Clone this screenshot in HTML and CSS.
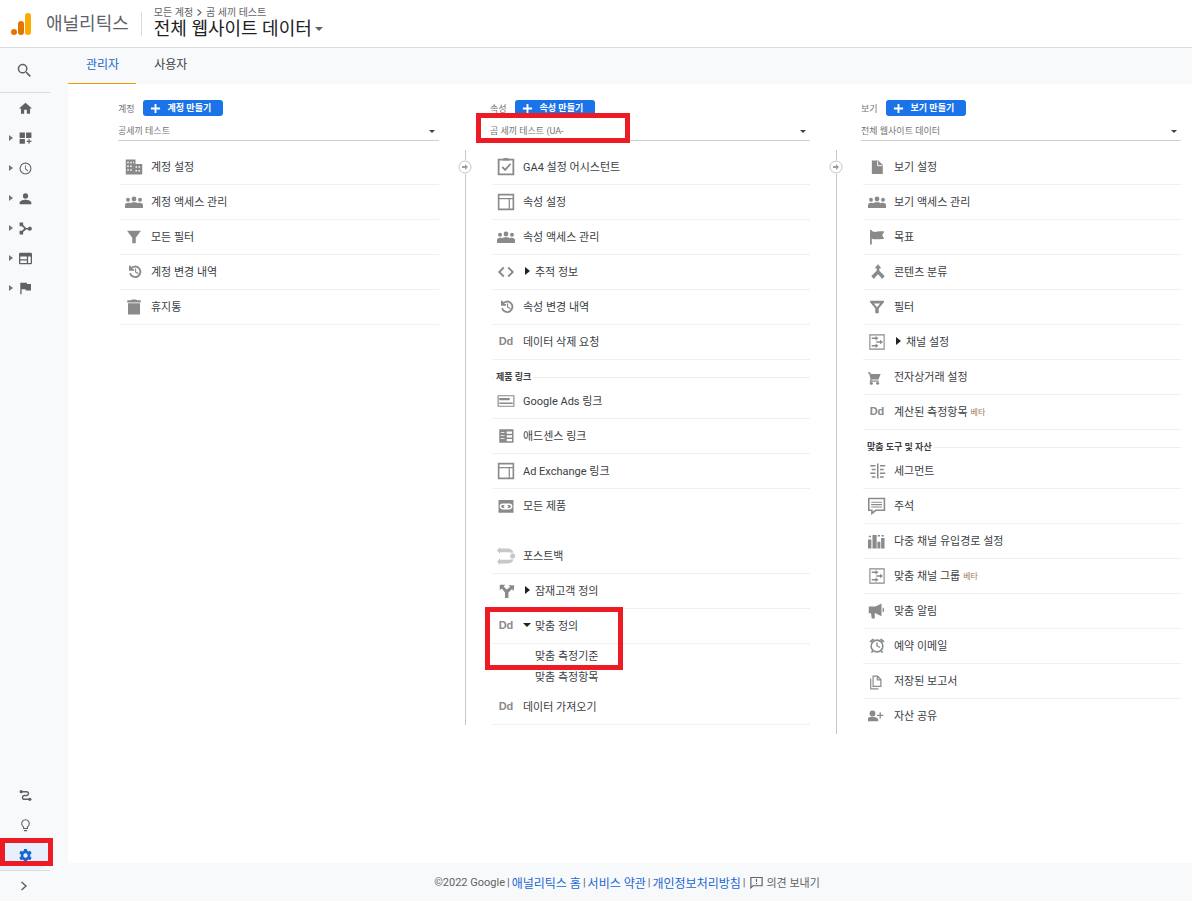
FILE: index.html
```
<!DOCTYPE html>
<html lang="ko">
<head>
    <meta charset="UTF-8">
    <meta name="viewport" content="width=device-width, initial-scale=1.0">
    <title>애널리틱스</title>
    <link rel="stylesheet" href="styles.css">
</head>
<body>
    <svg class="sprite" aria-hidden="true">
        <symbol id="i-search" viewBox="2 2 20 20"><path d="M15.500 14h-.8l-.3-.3A6.500 6.500 0 1 0 13.700 14.400l.3.3v.8l5 5 1.500-1.500zm-6 0a4.500 4.500 0 1 1 0-9 4.500 4.500 0 0 1 0 9z"/></symbol>
        <symbol id="i-home" viewBox="2 2 20 20"><path d="M10 20v-6h4v6h5v-8h3L12 3 2 12h3v8z"/></symbol>
        <symbol id="i-custom" viewBox="1 2 22 22"><path d="M2 3h9v9H2zM13 3h9v9h-9zM2 14h9v8H2zM17 14h2v3h3v2h-3v3h-2v-3h-3v-2h3z"/></symbol>
        <symbol id="i-clock" viewBox="0 0 24 24"><path d="M12 1a11 11 0 1 0 0 22 11 11 0 0 0 0-22zm0 20a9 9 0 1 1 0-18 9 9 0 0 1 0 18zM12.500 6H11v7l5 4 1-1.500-4.500-3.300z"/></symbol>
        <symbol id="i-person" viewBox="2 2 20 20"><path d="M12 12a4 4 0 1 0 0-8 4 4 0 0 0 0 8zm0 2c-4 0-9 1.500-9 4.500V21h18v-2.500c0-3-5-4.500-9-4.500z"/></symbol>
        <symbol id="i-acquire" viewBox="1 1 22 22"><path d="M2 2h6v4l5 5h3a3.500 3.500 0 1 1 0 2.500h-3L8 18v4H2v-6h4l4-4-4-4H2z"/></symbol>
        <symbol id="i-web" viewBox="2 2 20 20"><path d="M20 3H4a2 2 0 0 0-2 2v14c0 1.100.9 2 2 2h16a2 2 0 0 0 2-2V5a2 2 0 0 0-2-2zm-6 16H4v-4h10zm0-6H4V9h10zm6 6h-4V9h4z"/></symbol>
        <symbol id="i-flag" viewBox="2 3 20 20"><path d="M14.400 6 14 4H4v18h2v-8h6l.4 2h8V6z"/></symbol>
        <symbol id="i-path" viewBox="0 0 24 24"><circle cx="4" cy="5" r="3"/><circle cx="20" cy="19" r="3"/><path d="M5 5h9a3.500 3.500 0 0 1 0 7h-4a3.500 3.500 0 0 0 0 7h9" fill="none" stroke="currentColor" stroke-width="2.500"/></symbol>
        <symbol id="i-bulb" viewBox="0 0 24 24"><path d="M8.500 17.500v-3a7 7 0 1 1 7 0v3zM9 21.500h6" fill="none" stroke="currentColor" stroke-width="2"/></symbol>
        <symbol id="i-gear" viewBox="1 1 22 22"><path fill-rule="evenodd" d="M9.500 1h5l.5 3 2 1.200 3-1.200 2.500 4.300L20 10.500v3l2.500 2.200L20 20l-3-1.200-2 1.200-.5 3h-5L9 20l-2-1.200L4 20l-2.500-4.300L4 13.500v-3L1.500 8.300 4 4l3 1.200L9 4zM12 8.300a3.700 3.700 0 1 0 0 7.400 3.700 3.700 0 0 0 0-7.400z"/></symbol>
        <symbol id="i-chevron" viewBox="0 0 24 24"><path d="m7 4 9 8-9 8" fill="none" stroke="currentColor" stroke-width="3"/></symbol>
        <symbol id="i-plus" viewBox="0 0 12 12"><path d="M5 1h2v4h4v2H7v4H5V7H1V5h4z"/></symbol>
        <symbol id="i-building" viewBox="0 0 24 24"><path fill-rule="evenodd" d="M1 2h13v6h9v14H1zM3 5v2h2V5zm4 0v2h2V5zm4 0v2h1V5zM3 10v2h2v-2zm4 0v2h2v-2zm-4 5v2h2v-2zm4 0v2h2v-2zm7-4v2h2v-2zm4 0v2h2v-2zm-4 5v2h2v-2zm4 0v2h2v-2z"/></symbol>
        <symbol id="i-people" viewBox="1 0 22 24"><circle cx="4" cy="9" r="2.600"/><circle cx="12" cy="8" r="3.200"/><circle cx="20" cy="9" r="2.600"/><path d="M0 20v-4c0-2.500 4-3.500 7-2.500 2-1.600 8-1.600 10 0 3-1 7 0 7 2.500v4z"/></symbol>
        <symbol id="i-funnel" viewBox="-1 -1 26 26"><path d="M2 3h20l-7.500 10v8h-5v-8z"/></symbol>
        <symbol id="i-filter" viewBox="-1 -1 26 26"><path fill-rule="evenodd" d="M2 3h20v2l-7.500 9v7h-5v-7L2 5zm5.500 4L12 12.500 16.500 7z"/></symbol>
        <symbol id="i-history" viewBox="-4 -2 29 29"><path d="M5 8a8.500 8.500 0 1 1-.8 6.500M4 2.500V9h6.500" fill="none" stroke="currentColor" stroke-width="3"/><path d="M12 7h2v5l4 2.300-1 1.700-5-3z"/></symbol>
        <symbol id="i-trash" viewBox="0 0 24 24"><path d="M4 7h16v15H4zM3 3h5l1-1h6l1 1h5v3H3z"/></symbol>
        <symbol id="i-check" viewBox="1 2 22 22"><path d="M3 4h18v18H3zM7.500 13l3.500 3.500L17.500 9" fill="none" stroke="currentColor" stroke-width="2.200"/><path d="M8 5V2.500h2a2 2 0 0 1 4 0h2V5z"/></symbol>
        <symbol id="i-layout" viewBox="1 1 22 22"><path d="M3 3h18v18H3z" fill="none" stroke="currentColor" stroke-width="2"/><path d="M3 8h18M16 8v13" fill="none" stroke="currentColor" stroke-width="1.500"/></symbol>
        <symbol id="i-code" viewBox="0 0 24 24"><path d="m9 6-6 6 6 6M15 6l6 6-6 6" fill="none" stroke="currentColor" stroke-width="2.500"/></symbol>
        <symbol id="i-ads" viewBox="1 0 22 24"><path d="M1.500 5h21v14h-21z" fill="none" stroke="currentColor" stroke-width="1.500"/><path d="M3 8h14v3H3zM3 14h18v2H3z"/></symbol>
        <symbol id="i-news" viewBox="0 0 24 24"><path fill-rule="evenodd" d="M3 3h19v18H3zm10 3v3h7V6zm0 5v3h7v-3zm0 5v3h7v-3zM5 7v1h5V7zm0 4v1h5v-1zm0 4v1h5v-1z"/></symbol>
        <symbol id="i-link" viewBox="0 0 24 24"><path d="M2 4h20v17H2z"/><path d="M11 9.500H7.500a3 3 0 0 0 0 6H11zm2 0h3.500a3 3 0 0 1 0 6H13zM9 12.500h6" fill="none" stroke="#fff" stroke-width="2"/></symbol>
        <symbol id="i-postback" viewBox="0 0 24 24"><path d="M0 4.500 4 0v2h10c4 0 7 2 8 5.500h-4.500C16.500 7 15 7 13 7H4v2zM0 19.500 4 15v2h9c2 0 3.500 0 4.500-.5H22c-1 3.500-4 5.500-8 5.500H4v2z"/><circle cx="21" cy="12" r="3.500"/></symbol>
        <symbol id="i-split" viewBox="-2 -1 26 26"><path d="M2 3h8L7.500 5.500 12 10l5-4-2-2.500 8 .5-1 8-2.500-2.500L14.500 14v8h-5v-8L5 8.500 2 11z"/></symbol>
        <symbol id="i-file" viewBox="-2 -2 28 28"><path d="M4 2h10l7 7v14H4z"/><path d="M13 3v7h7" fill="none" stroke="#fff" stroke-width="1.500"/></symbol>
        <symbol id="i-goal" viewBox="-2 -1 26 26"><path d="M1 2h2.500v1.500c5 3 9-1 18 .5l-3 5.500 3 5.500c-7-.5-12 1.500-18-.5V23H1z"/></symbol>
        <symbol id="i-merge" viewBox="-3 -1 27 27"><path d="m12 1 5 6h-3v3.500l8 8-3.500 4.500-6.500-7-6.500 7L2 18.500l8-8V7H7z"/></symbol>
        <symbol id="i-channel" viewBox="0 0 24 24"><path d="M2.500 2.500h19v19h-19z" fill="none" stroke="currentColor" stroke-width="1.500"/><path d="M5 6h5V4l4 3-4 3V8H5zM11 11h5V9l4 3-4 3v-2h-5zM5 16h5v-2l4 3-4 3v-2H5z"/></symbol>
        <symbol id="i-cart" viewBox="1 -4 30 30"><path d="M0 3h4.500l1.200 3H22l-3.500 9H7l-.7 2H19v2H3.500l1.800-4.500L2.800 5H0z"/><circle cx="6.500" cy="21.500" r="2.500"/><circle cx="17" cy="21.500" r="2.500"/></symbol>
        <symbol id="i-segment" viewBox="0 0 24 24"><path d="M3 4h7v2H3zM5 9h5v2H5zM3 14h7v2H3zM5 19h5v2H5zM12 2h2v20h-2zM16 4h7v2h-7zM16 9h5v2h-5zM16 14h7v2h-7zM16 19h5v2h-5z"/></symbol>
        <symbol id="i-note" viewBox="1 1 23 23"><path d="M2 3h20v15H11l-5 4v-4H2z" fill="none" stroke="currentColor" stroke-width="2"/><path d="M5 7h14v1.500H5zM5 10h14v1.500H5zM5 13h14v1.500H5z"/></symbol>
        <symbol id="i-bars" viewBox="1 0 24 24"><path d="M1 10h4.500v12H1zM7 4h5.500v18H7zM13.500 13h4v9h-4zM18.500 8H23v14h-4.500zM2 5h3v2H2zM14 4h3v2h-3zM19 4h3v2h-3z"/></symbol>
        <symbol id="i-horn" viewBox="1 0 24 24"><path d="M2 6h9l8-4v17l-8-4H10v7H6l-1-7H2zM20.500 7a4 4 0 0 1 0 7z"/></symbol>
        <symbol id="i-alarm" viewBox="-1 0 26 26"><circle cx="12" cy="13" r="8.500" fill="none" stroke="currentColor" stroke-width="2.200"/><path d="m1 6 5-4 2 2-5 4zM23 6l-5-4-2 2 5 4zM11 8h2v4.500l4 2-1 1.500-5-2.500zM5 19l2 2-2 2-2-1zM19 19l-2 2 2 2 2-1z"/></symbol>
        <symbol id="i-copy" viewBox="-2 -5 30 30"><path d="M6.500 2H14l5.500 5.500V19h-13zM13.500 2v6H19M2.500 6v17h13" fill="none" stroke="currentColor" stroke-width="2"/></symbol>
        <symbol id="i-share" viewBox="2 -2 28 28"><circle cx="9" cy="8" r="4.500"/><path d="M0 20v-2.500c0-3 6-4.500 9-4.500s9 1.500 9 4.500V20zM20 6h2v4h4v2h-4v4h-2v-4h-4v-2h4z"/></symbol>
        <symbol id="i-feedback" viewBox="1 1 22 22"><path d="M2.500 3.500h19v14H6l-3.500 3.500z" fill="none" stroke="currentColor" stroke-width="2"/><path d="M11 6h2v5h-2zM11 13h2v2h-2z"/></symbol>
        <symbol id="i-arrow" viewBox="0 0 14 14"><circle cx="7" cy="7" r="6" fill="#fff" stroke="#c6c6c6"/><path d="M4 6h3V4l3 3-3 3V8H4z"/></symbol>
    </svg>

    <header class="header">
        <svg class="logo" viewBox="0 0 20 24" aria-hidden="true">
            <rect x="14" y="1" width="6" height="22" rx="3" fill="#f9ab00"/>
            <rect x="7" y="9" width="6" height="14" rx="3" fill="#e37400"/>
            <circle cx="3" cy="20" r="3" fill="#e37400"/>
        </svg>
        <h1 class="product">애널리틱스</h1>
        <div class="account">
            <div class="crumbs">모든 계정 <svg class="crumb-icon"><use href="#i-chevron"/></svg> 곰 세끼 테스트</div>
            <button class="view-picker">전체 웹사이트 데이터<span class="caret"></span></button>
        </div>
    </header>

    <div class="layout">
        <nav class="sidebar">
            <button class="search" aria-label="검색"><svg class="search-icon"><use href="#i-search"/></svg></button>
            <ul class="side-list">
                <li><a href="#" class="side-item" aria-label="홈"><svg><use href="#i-home"/></svg></a></li>
                <li><a href="#" class="side-item expand" aria-label="맞춤설정"><svg><use href="#i-custom"/></svg></a></li>
                <li><a href="#" class="side-item expand" aria-label="실시간"><svg><use href="#i-clock"/></svg></a></li>
                <li><a href="#" class="side-item expand" aria-label="잠재고객"><svg><use href="#i-person"/></svg></a></li>
                <li><a href="#" class="side-item expand" aria-label="획득"><svg><use href="#i-acquire"/></svg></a></li>
                <li><a href="#" class="side-item expand" aria-label="행동"><svg><use href="#i-web"/></svg></a></li>
                <li><a href="#" class="side-item expand" aria-label="전환"><svg><use href="#i-flag"/></svg></a></li>
            </ul>
            <ul class="side-list side-bottom">
                <li><a href="#" class="side-item" aria-label="기여"><svg><use href="#i-path"/></svg></a></li>
                <li><a href="#" class="side-item" aria-label="탐색"><svg><use href="#i-bulb"/></svg></a></li>
                <li class="marked"><a href="#" class="side-item active" aria-label="관리"><svg><use href="#i-gear"/></svg></a><span class="mark mark-admin"></span></li>
            </ul>
            <button class="collapse" aria-label="펼치기"><svg class="collapse-icon"><use href="#i-chevron"/></svg></button>
        </nav>

        <div class="content">
            <div class="tabs">
                <a href="#" class="tab active">관리자</a>
                <a href="#" class="tab">사용자</a>
            </div>

            <main class="panel">
                <section class="column">
                    <div class="column-body">
                        <div class="column-head">
                            <label for="account">계정</label>
                            <button class="create"><svg><use href="#i-plus"/></svg>계정 만들기</button>
                        </div>
                        <div class="picker">
                            <select id="account"><option>공세끼 테스트</option></select>
                        </div>
                        <ul class="menu">
                            <li><a href="#" class="row"><svg><use href="#i-building"/></svg>계정 설정</a></li>
                            <li><a href="#" class="row"><svg><use href="#i-people"/></svg>계정 액세스 관리</a></li>
                            <li><a href="#" class="row"><svg><use href="#i-funnel"/></svg>모든 필터</a></li>
                            <li><a href="#" class="row"><svg><use href="#i-history"/></svg>계정 변경 내역</a></li>
                            <li><a href="#" class="row"><svg><use href="#i-trash"/></svg>휴지통</a></li>
                        </ul>
                    </div>
                </section>

                <section class="column linked">
                    <div class="connector"><svg><use href="#i-arrow"/></svg></div>
                    <div class="column-body">
                        <div class="column-head">
                            <label for="property">속성</label>
                            <button class="create"><svg><use href="#i-plus"/></svg>속성 만들기</button>
                        </div>
                        <div class="picker">
                            <select id="property"><option>곰 세끼 테스트 (UA-</option></select>
                            <span class="mark mark-property"></span>
                        </div>
                        <ul class="menu">
                            <li><a href="#" class="row"><svg><use href="#i-check"/></svg>GA4 설정 어시스턴트</a></li>
                            <li><a href="#" class="row"><svg><use href="#i-layout"/></svg>속성 설정</a></li>
                            <li><a href="#" class="row"><svg><use href="#i-people"/></svg>속성 액세스 관리</a></li>
                            <li><a href="#" class="row"><svg><use href="#i-code"/></svg><span class="toggle"></span>추적 정보</a></li>
                            <li><a href="#" class="row"><svg><use href="#i-history"/></svg>속성 변경 내역</a></li>
                            <li><a href="#" class="row"><span class="dd">Dd</span>데이터 삭제 요청</a></li>
                        </ul>
                        <h2 class="group-title">제품 링크</h2>
                        <ul class="menu">
                            <li><a href="#" class="row"><svg><use href="#i-ads"/></svg>Google Ads 링크</a></li>
                            <li><a href="#" class="row"><svg><use href="#i-news"/></svg>애드센스 링크</a></li>
                            <li><a href="#" class="row"><svg><use href="#i-layout"/></svg>Ad Exchange 링크</a></li>
                            <li><a href="#" class="row plain"><svg><use href="#i-link"/></svg>모든 제품</a></li>
                        </ul>
                        <ul class="menu spaced">
                            <li><a href="#" class="row"><svg class="pale"><use href="#i-postback"/></svg>포스트백</a></li>
                            <li><a href="#" class="row"><svg><use href="#i-split"/></svg><span class="toggle"></span>잠재고객 정의</a></li>
                            <li class="marked">
                                <a href="#" class="row"><span class="dd">Dd</span><span class="toggle open"></span>맞춤 정의</a>
                                <ul class="submenu">
                                    <li><a href="#">맞춤 측정기준</a></li>
                                    <li><a href="#">맞춤 측정항목</a></li>
                                </ul>
                                <span class="mark mark-custom"></span>
                            </li>
                            <li><a href="#" class="row"><span class="dd">Dd</span>데이터 가져오기</a></li>
                        </ul>
                    </div>
                </section>

                <section class="column linked">
                    <div class="connector"><svg><use href="#i-arrow"/></svg></div>
                    <div class="column-body">
                        <div class="column-head">
                            <label for="view">보기</label>
                            <button class="create"><svg><use href="#i-plus"/></svg>보기 만들기</button>
                        </div>
                        <div class="picker">
                            <select id="view"><option>전체 웹사이트 데이터</option></select>
                        </div>
                        <ul class="menu">
                            <li><a href="#" class="row"><svg><use href="#i-file"/></svg>보기 설정</a></li>
                            <li><a href="#" class="row"><svg><use href="#i-people"/></svg>보기 액세스 관리</a></li>
                            <li><a href="#" class="row"><svg><use href="#i-goal"/></svg>목표</a></li>
                            <li><a href="#" class="row"><svg><use href="#i-merge"/></svg>콘텐츠 분류</a></li>
                            <li><a href="#" class="row"><svg><use href="#i-filter"/></svg>필터</a></li>
                            <li><a href="#" class="row"><svg><use href="#i-channel"/></svg><span class="toggle"></span>채널 설정</a></li>
                            <li><a href="#" class="row"><svg><use href="#i-cart"/></svg>전자상거래 설정</a></li>
                            <li><a href="#" class="row"><span class="dd">Dd</span>계산된 측정항목<span class="beta">베타</span></a></li>
                        </ul>
                        <h2 class="group-title">맞춤 도구 및 자산</h2>
                        <ul class="menu">
                            <li><a href="#" class="row"><svg><use href="#i-segment"/></svg>세그먼트</a></li>
                            <li><a href="#" class="row"><svg><use href="#i-note"/></svg>주석</a></li>
                            <li><a href="#" class="row"><svg><use href="#i-bars"/></svg>다중 채널 유입경로 설정</a></li>
                            <li><a href="#" class="row"><svg><use href="#i-channel"/></svg>맞춤 채널 그룹<span class="beta">베타</span></a></li>
                            <li><a href="#" class="row"><svg><use href="#i-horn"/></svg>맞춤 알림</a></li>
                            <li><a href="#" class="row"><svg><use href="#i-alarm"/></svg>예약 이메일</a></li>
                            <li><a href="#" class="row"><svg><use href="#i-copy"/></svg>저장된 보고서</a></li>
                            <li><a href="#" class="row plain"><svg><use href="#i-share"/></svg>자산 공유</a></li>
                        </ul>
                    </div>
                </section>
            </main>

            <footer class="footer">
                <span>©2022 Google</span> |
                <a href="#">애널리틱스 홈</a> |
                <a href="#">서비스 약관</a> |
                <a href="#">개인정보처리방침</a> |
                <button class="feedback"><svg><use href="#i-feedback"/></svg>의견 보내기</button>
            </footer>
        </div>
    </div>
</body>
</html>
```
FILE: styles.css
```
* {
    box-sizing: border-box;
}
body {
    margin: 0;
    min-height: 100vh;
    display: flex;
    flex-direction: column;
    font-family: Roboto, "Noto Sans CJK KR", sans-serif;
    font-size: 11px;
    color: #3c4043;
    background-color: #f8f9fb;
}
ul {
    list-style-type: none;
    margin: 0;
    padding: 0;
}
a {
    color: inherit;
    text-decoration: none;
}
button {
    border: none;
    padding: 0;
    background: none;
    color: inherit;
    font: inherit;
    cursor: pointer;
}
svg {
    fill: currentColor;
    flex-shrink: 0;
}
.sprite {
    display: none;
}

/* header */
.header {
    display: flex;
    align-items: center;
    height: 48px;
    padding-left: 11px;
    background-color: #ffffff;
    border-bottom: 1px solid #dadce0;
}
.logo {
    width: 20px;
    height: 24px;
    margin-right: 15px;
}
.product {
    margin: 0;
    font-size: 18px;
    font-weight: normal;
    line-height: 24px;
    color: #5f6368;
    padding-right: 12px;
    border-right: 1px solid #dadce0;
}
.account {
    padding: 0 12px 2px;
}
.crumbs {
    display: flex;
    align-items: center;
    gap: 2px;
    font-size: 10px;
    line-height: 12px;
    color: #5f6368;
}
.crumb-icon {
    width: 9px;
    height: 9px;
}
.view-picker {
    display: flex;
    align-items: center;
    gap: 3px;
    font-size: 18px;
    line-height: 20px;
    color: #202124;
}
.caret {
    border: 4px solid transparent;
    border-top-color: #5f6368;
    border-bottom: none;
}

/* sidebar */
.layout {
    display: flex;
    flex: 1;
}
.sidebar {
    display: flex;
    flex-direction: column;
    width: 50px;
    color: #616161;
}
.search {
    height: 45px;
    border-bottom: 1px solid #dadce0;
}
.search-icon {
    display: block;
    width: 15px;
    height: 15px;
    margin-left: 17px;
}
.side-bottom {
    margin-top: auto;
}
.side-item {
    display: flex;
    align-items: center;
    height: 30px;
    padding-left: 19px;
}
.side-item svg {
    width: 13px;
    height: 13px;
}
.side-item.expand {
    padding-left: 9px;
}
.side-item.expand::before {
    content: "";
    border: 3px solid transparent;
    border-left: 4px solid #757575;
    border-right: none;
    margin-right: 6px;
}
.side-item.active {
    color: #1967d2;
    background-color: #e8f0fe;
    border-radius: 0 15px 15px 0;
}
.collapse {
    height: 31px;
    border-top: 1px solid #dadce0;
}
.collapse-icon {
    display: block;
    width: 12px;
    height: 12px;
    margin-left: 18px;
}

/* tabs */
.content {
    display: flex;
    flex-direction: column;
    flex: 1;
    margin-left: 18px;
}
.tabs {
    display: flex;
    height: 36px;
}
.tab {
    padding: 0 17px 0 18px;
    font-size: 12px;
    line-height: 35px;
}
.tab.active {
    color: #1967d2;
    border-bottom: 1px solid #f29900;
}

/* admin columns */
.panel {
    display: flex;
    align-items: flex-start;
    flex: 1;
    padding: 0 11px 0 50px;
    background-color: #ffffff;
}
.column {
    display: flex;
    flex: 1 1 0;
}
.column.linked {
    flex-basis: 50px;
}
.column-body {
    flex: 1;
    min-width: 0;
    padding-top: 16px;
}
.column.linked .column-body {
    padding-left: 1px;
}
.connector {
    display: flex;
    flex-direction: column;
    align-items: center;
    width: 50px;
    padding-left: 2px;
    margin-top: 66px;
    color: #9e9e9e;
}
.connector svg {
    width: 14px;
    height: 14px;
}
.connector::before,
.connector::after {
    content: "";
    width: 1px;
    height: 10px;
    background-color: #c6c6c6;
}
.connector::after {
    flex: 1;
}
.column-head {
    display: flex;
    align-items: center;
    gap: 8px;
    font-size: 9px;
    color: #757575;
}
.create {
    display: flex;
    align-items: center;
    gap: 7px;
    height: 16px;
    padding: 0 12px 0 7px;
    border-radius: 3px;
    background-color: #1a73e8;
    color: #ffffff;
    font-weight: bold;
    line-height: 14px;
}
.create svg {
    width: 11px;
    height: 11px;
}
.picker {
    position: relative;
    margin: 6px 0 9px;
}
.picker::after {
    content: "";
    position: absolute;
    right: 4px;
    top: 8px;
    border: 3px solid transparent;
    border-top-color: #424242;
    border-bottom: none;
    pointer-events: none;
}
.picker select {
    display: block;
    width: 100%;
    height: 19px;
    padding: 0;
    appearance: none;
    border: none;
    border-bottom: 1px solid #d0d0d0;
    border-radius: 0;
    background: none;
    color: #757575;
    font: inherit;
    font-size: 9px;
}
.menu {
    margin-left: 2px;
}
.menu.spaced {
    margin-top: 15px;
}
.row {
    display: flex;
    align-items: center;
    height: 35px;
    padding: 0 0 2px 5px;
    border-bottom: 1px solid #f0f0f0;
}
.row.plain {
    border-bottom-color: transparent;
}
.row svg {
    width: 18px;
    height: 18px;
    margin: 2px 8px 0 0;
    color: #8a8a8a;
}
.row svg.pale {
    color: #c8c8c8;
}
.dd {
    width: 18px;
    margin-right: 8px;
    text-align: center;
    font-family: "Liberation Sans", sans-serif;
    font-weight: bold;
    color: #8a8a8a;
}
.toggle {
    border: 4px solid transparent;
    border-left: 5px solid #212121;
    border-right: none;
    margin: 0 5px 0 2px;
}
.toggle.open {
    border: 4px solid transparent;
    border-top: 4px solid #212121;
    border-bottom: none;
    margin: 0 4px 0 0;
}
.beta {
    margin-left: 3px;
    font-size: 8px;
    color: #a1795a;
}
.group-title {
    display: flex;
    align-items: center;
    gap: 2px;
    height: 24px;
    margin: 0 0 0 2px;
    padding-top: 10px;
    font-size: 9px;
    line-height: 14px;
}
.group-title::before,
.group-title::after {
    content: "";
    width: 2px;
    height: 1px;
    background-color: #eeeeee;
}
.group-title::after {
    flex: 1;
}
.submenu {
    padding: 2px 0 2px 43px;
    line-height: 21px;
}

/* red highlight frames */
.marked {
    position: relative;
}
.mark {
    position: absolute;
    border: 5px solid #ed1c24;
    pointer-events: none;
}
.mark-admin {
    left: 0;
    top: -2px;
    width: 53px;
    height: 28px;
}
.mark-property {
    left: -14px;
    top: -9px;
    width: 154px;
    height: 30px;
}
.mark-custom {
    left: -7px;
    top: -2px;
    width: 138px;
    height: 63px;
}

/* footer */
.footer {
    display: flex;
    align-items: center;
    justify-content: center;
    gap: 2px;
    height: 38px;
    padding-right: 6px;
    font-size: 11px;
    color: #5f6368;
}
.footer a {
    font-size: 12px;
    color: #1967d2;
}
.feedback {
    display: flex;
    align-items: center;
    gap: 3px;
    margin-left: 3px;
}
.feedback svg {
    width: 13px;
    height: 13px;
}
```
